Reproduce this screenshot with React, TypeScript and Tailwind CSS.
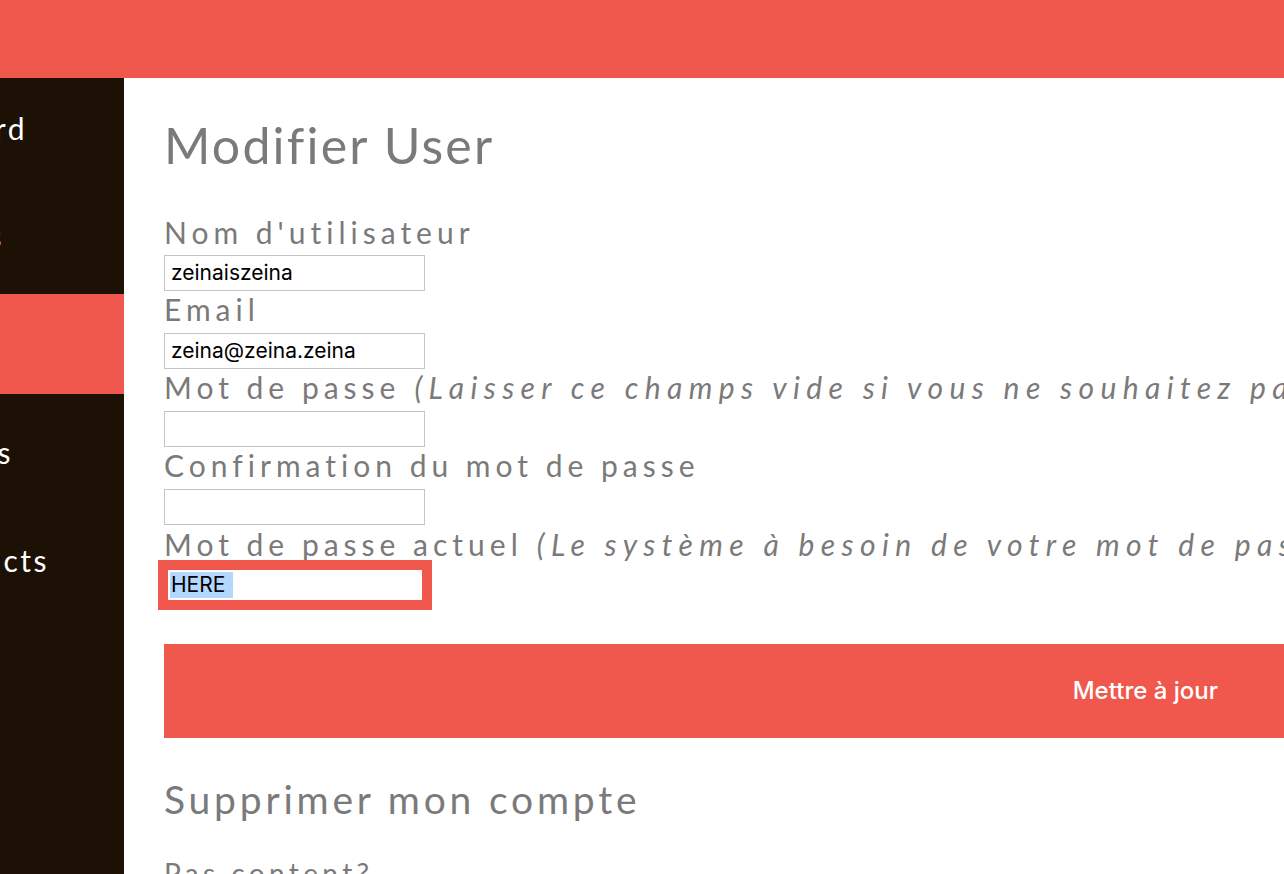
import React from "react";

const labelFont = { fontFamily: "Lato, 'Open Sans', sans-serif" };

function Field({
  label,
  hint,
  value,
}: {
  label: string;
  hint?: string;
  value?: string;
}) {
  return (
    <div className="flex flex-col">
      <div className="h-[42px] flex items-end pb-[9px] whitespace-nowrap text-[30px] leading-none tracking-[5px] text-[#7a7a7a]">
        <span>{label}</span>
        {hint && <span className="italic ml-[14px] tracking-[6.4px]">{hint}</span>}
      </div>
      <Input value={value} />
    </div>
  );
}

function Input({ value }: { value?: string }) {
  return (
    <div className="w-[261px] h-[36px] border border-[#c4c4c4] bg-white flex items-center pl-[6px] text-[21px] text-black font-['Inter',sans-serif]">
      {value}
    </div>
  );
}

function NavItem({ label, end, active }: { label: string; end: string; active?: boolean }) {
  return (
    <div className={`h-[100px] flex items-center ${active ? "bg-[#f1584d]" : ""}`}>
      <div className={`flex justify-end ${end}`}>
        <span className="shrink-0 tracking-[2.5px]">{label}</span>
      </div>
    </div>
  );
}

export default function App() {
  return (
    <div
      className="w-[1284px] h-[874px] overflow-hidden flex flex-col bg-white"
      style={labelFont}
    >
      <div className="h-[78px] shrink-0 bg-[#f1584d]" />
      <div className="flex flex-1 min-h-0">
        <aside className="w-[124px] shrink-0 bg-[#1d1005] flex flex-col gap-[8px] overflow-hidden text-white text-[30px] leading-none whitespace-nowrap">
          <NavItem label="Dashboard" end="w-[27px]" />
          <NavItem label="Users" end="w-[4px]" />
          <NavItem label="Profil" end="w-[0px]" active />
          <NavItem label="Articles" end="w-[13px]" />
          <NavItem label="Contacts" end="w-[49px]" />
        </aside>
        <main className="flex-1 min-w-0 pl-[40px] pt-[37px]">
          <h1 className="text-[50px] leading-none tracking-[2.2px] text-[#7a7a7a] h-[60px] flex items-center">
            Modifier User
          </h1>
          <div className="mt-[40px] flex flex-col">
            <div className="h-[40px] flex items-end pb-[8px] text-[30px] leading-none tracking-[5px] text-[#7a7a7a] whitespace-nowrap">
              Nom d'utilisateur
            </div>
            <Input value="zeinaiszeina" />
            <Field label="Email" value="zeina@zeina.zeina" />
            <Field
              label="Mot de passe"
              hint="(Laisser ce champs vide si vous ne souhaitez pas le changer)"
            />
            <Field label="Confirmation du mot de passe" />
            <div className="h-[35px] flex items-end pb-[1px] whitespace-nowrap text-[30px] leading-none tracking-[5px] text-[#7a7a7a]">
              <span>Mot de passe actuel</span>
              <span className="italic ml-[14px] tracking-[6.4px]">
                (Le système à besoin de votre mot de passe pour confirmer)
              </span>
            </div>
            <div className="ml-[-6px] w-[274px] h-[50px] bg-[#f1584d] p-[10px]">
              <div className="h-full bg-white flex items-center pl-[2px] text-[21px] text-black font-['Inter',sans-serif]">
                <span className="bg-[#b4d7fe] h-[26px] flex items-center pr-[8px] pl-[1px]">
                  HERE
                </span>
              </div>
            </div>
          </div>
          <div className="mt-[34px] w-[1120px] h-[94px] bg-[#f1584d] flex items-center justify-end pr-[66px] text-white text-[24px] font-medium font-['Inter',sans-serif]">
            Mettre à jour
          </div>
          <h2 className="mt-[42px] text-[39px] leading-none tracking-[3.8px] text-[#7a7a7a]">
            Supprimer mon compte
          </h2>
          <p className="mt-[40px] text-[28px] leading-none tracking-[4.4px] text-[#7a7a7a]">
            Pas content?
          </p>
        </main>
      </div>
    </div>
  );
}
